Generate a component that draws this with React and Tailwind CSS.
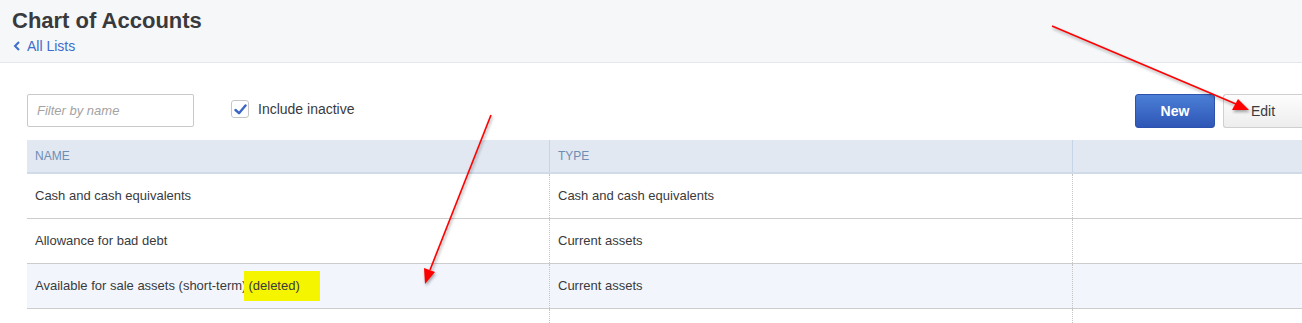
import React from "react";

const rows = [
  { name: "Cash and cash equivalents", type: "Cash and cash equivalents" },
  { name: "Allowance for bad debt", type: "Current assets" },
  { name: "Available for sale assets (short-term)", deleted: true, type: "Current assets", hl: true },
  { name: "", type: "" },
];

export default function App() {
  return (
    <div
      className="relative w-[1302px] h-[323px] overflow-hidden bg-white text-[#393a3d]"
      style={{ fontFamily: '"Liberation Sans", Arial, sans-serif' }}
    >
      {/* Page header */}
      <div className="h-[63px] bg-[#f6f7f9] border-b border-[#e3e6ec] pl-[12px] pt-[8px]">
        <h1 className="text-[22px] leading-[25px] font-bold text-[#393a3d]">Chart of Accounts</h1>
        <div className="mt-[5px] flex items-center gap-[6px] text-[14px] leading-[16px] text-[#3d6ecb]">
          <svg width="8" height="10" viewBox="0 0 8 10" className="ml-[1px]">
            <path d="M6 1 L2 5 L6 9" fill="none" stroke="#3d6ecb" strokeWidth="2" />
          </svg>
          <span>All Lists</span>
        </div>
      </div>

      {/* Toolbar */}
      <div className="pl-[27px] pt-[31px] flex items-start">
        <div className="w-[167px] h-[33px] border border-[#c9c9c9] rounded-[2px] flex items-center pl-[9px] text-[13px] italic text-[#a3a3a3]">
          Filter by name
        </div>
        <div className="ml-[37px] mt-[6px] flex items-center gap-[9px]">
          <div className="w-[18px] h-[18px] border border-[#c6c6c6] rounded-[3px] bg-white flex items-center justify-center">
            <svg width="13" height="11" viewBox="0 0 13 11">
              <path d="M1.5 6 L5 9.2 L11.5 1.5" fill="none" stroke="#3c66c4" strokeWidth="2.4" strokeLinecap="round" strokeLinejoin="round" />
            </svg>
          </div>
          <span className="text-[14px] leading-[16px] text-[#393a3d]">Include inactive</span>
        </div>
        <div className="ml-auto flex gap-[8px]">
          <button className="w-[80px] h-[34px] rounded-[3px] bg-gradient-to-b from-[#4b7fd6] to-[#2f56b6] border border-[#2c52ae] text-white text-[14px] font-bold">
            New
          </button>
          <button className="w-[79px] h-[34px] rounded-l-[3px] bg-gradient-to-b from-[#fdfdfd] to-[#ededed] border border-r-0 border-[#cfcfcf] text-[14px] text-[#393a3d]">
            Edit
          </button>
        </div>
      </div>

      {/* Table */}
      <div className="ml-[27px] mt-[12px]">
        <div className="grid grid-cols-[522px_523px_1fr] h-[34px] bg-[#e1e8f2] border-b-2 border-[#cfdbe9] text-[12px] text-[#6e8db3] uppercase">
          <div className="pl-[8px] flex items-center">Name</div>
          <div className="pl-[8px] flex items-center border-l border-[#c5d4e6]">Type</div>
          <div className="border-l border-[#c5d4e6]"></div>
        </div>
        {rows.map((r, i) => (
          <div
            key={i}
            className={`grid grid-cols-[522px_523px_1fr] h-[45px] border-b border-[#cdcdcd] text-[13px] ${r.hl ? "bg-[#f2f6fc]" : "bg-white"}`}
          >
            <div className="pl-[8px] flex items-center">
              <span>{r.name}</span>
              {r.deleted && (
                <span className="ml-[-2px] h-[30px] w-[76px] bg-[#f5f500] flex items-center pl-[4px]">(deleted)</span>
              )}
            </div>
            <div className="pl-[8px] flex items-center border-l border-dotted border-[#c4c4c4]">{r.type}</div>
            <div className="border-l border-dotted border-[#c4c4c4]"></div>
          </div>
        ))}
      </div>

      {/* Annotation arrows */}
      <svg
        className="absolute inset-0 pointer-events-none"
        width="1302"
        height="323"
        style={{ filter: "drop-shadow(1px 2px 1.5px rgba(0,0,0,0.35))" }}
      >
        <line x1="1052" y1="26" x2="1236" y2="104" stroke="#ff0000" strokeWidth="1.6" />
        <polygon points="1249,110 1232,110 1238,99" fill="#ff0000" />
        <line x1="491" y1="115" x2="430" y2="270" stroke="#ff0000" strokeWidth="1.6" />
        <polygon points="425,284 424,268 435,272" fill="#ff0000" />
      </svg>
    </div>
  );
}
